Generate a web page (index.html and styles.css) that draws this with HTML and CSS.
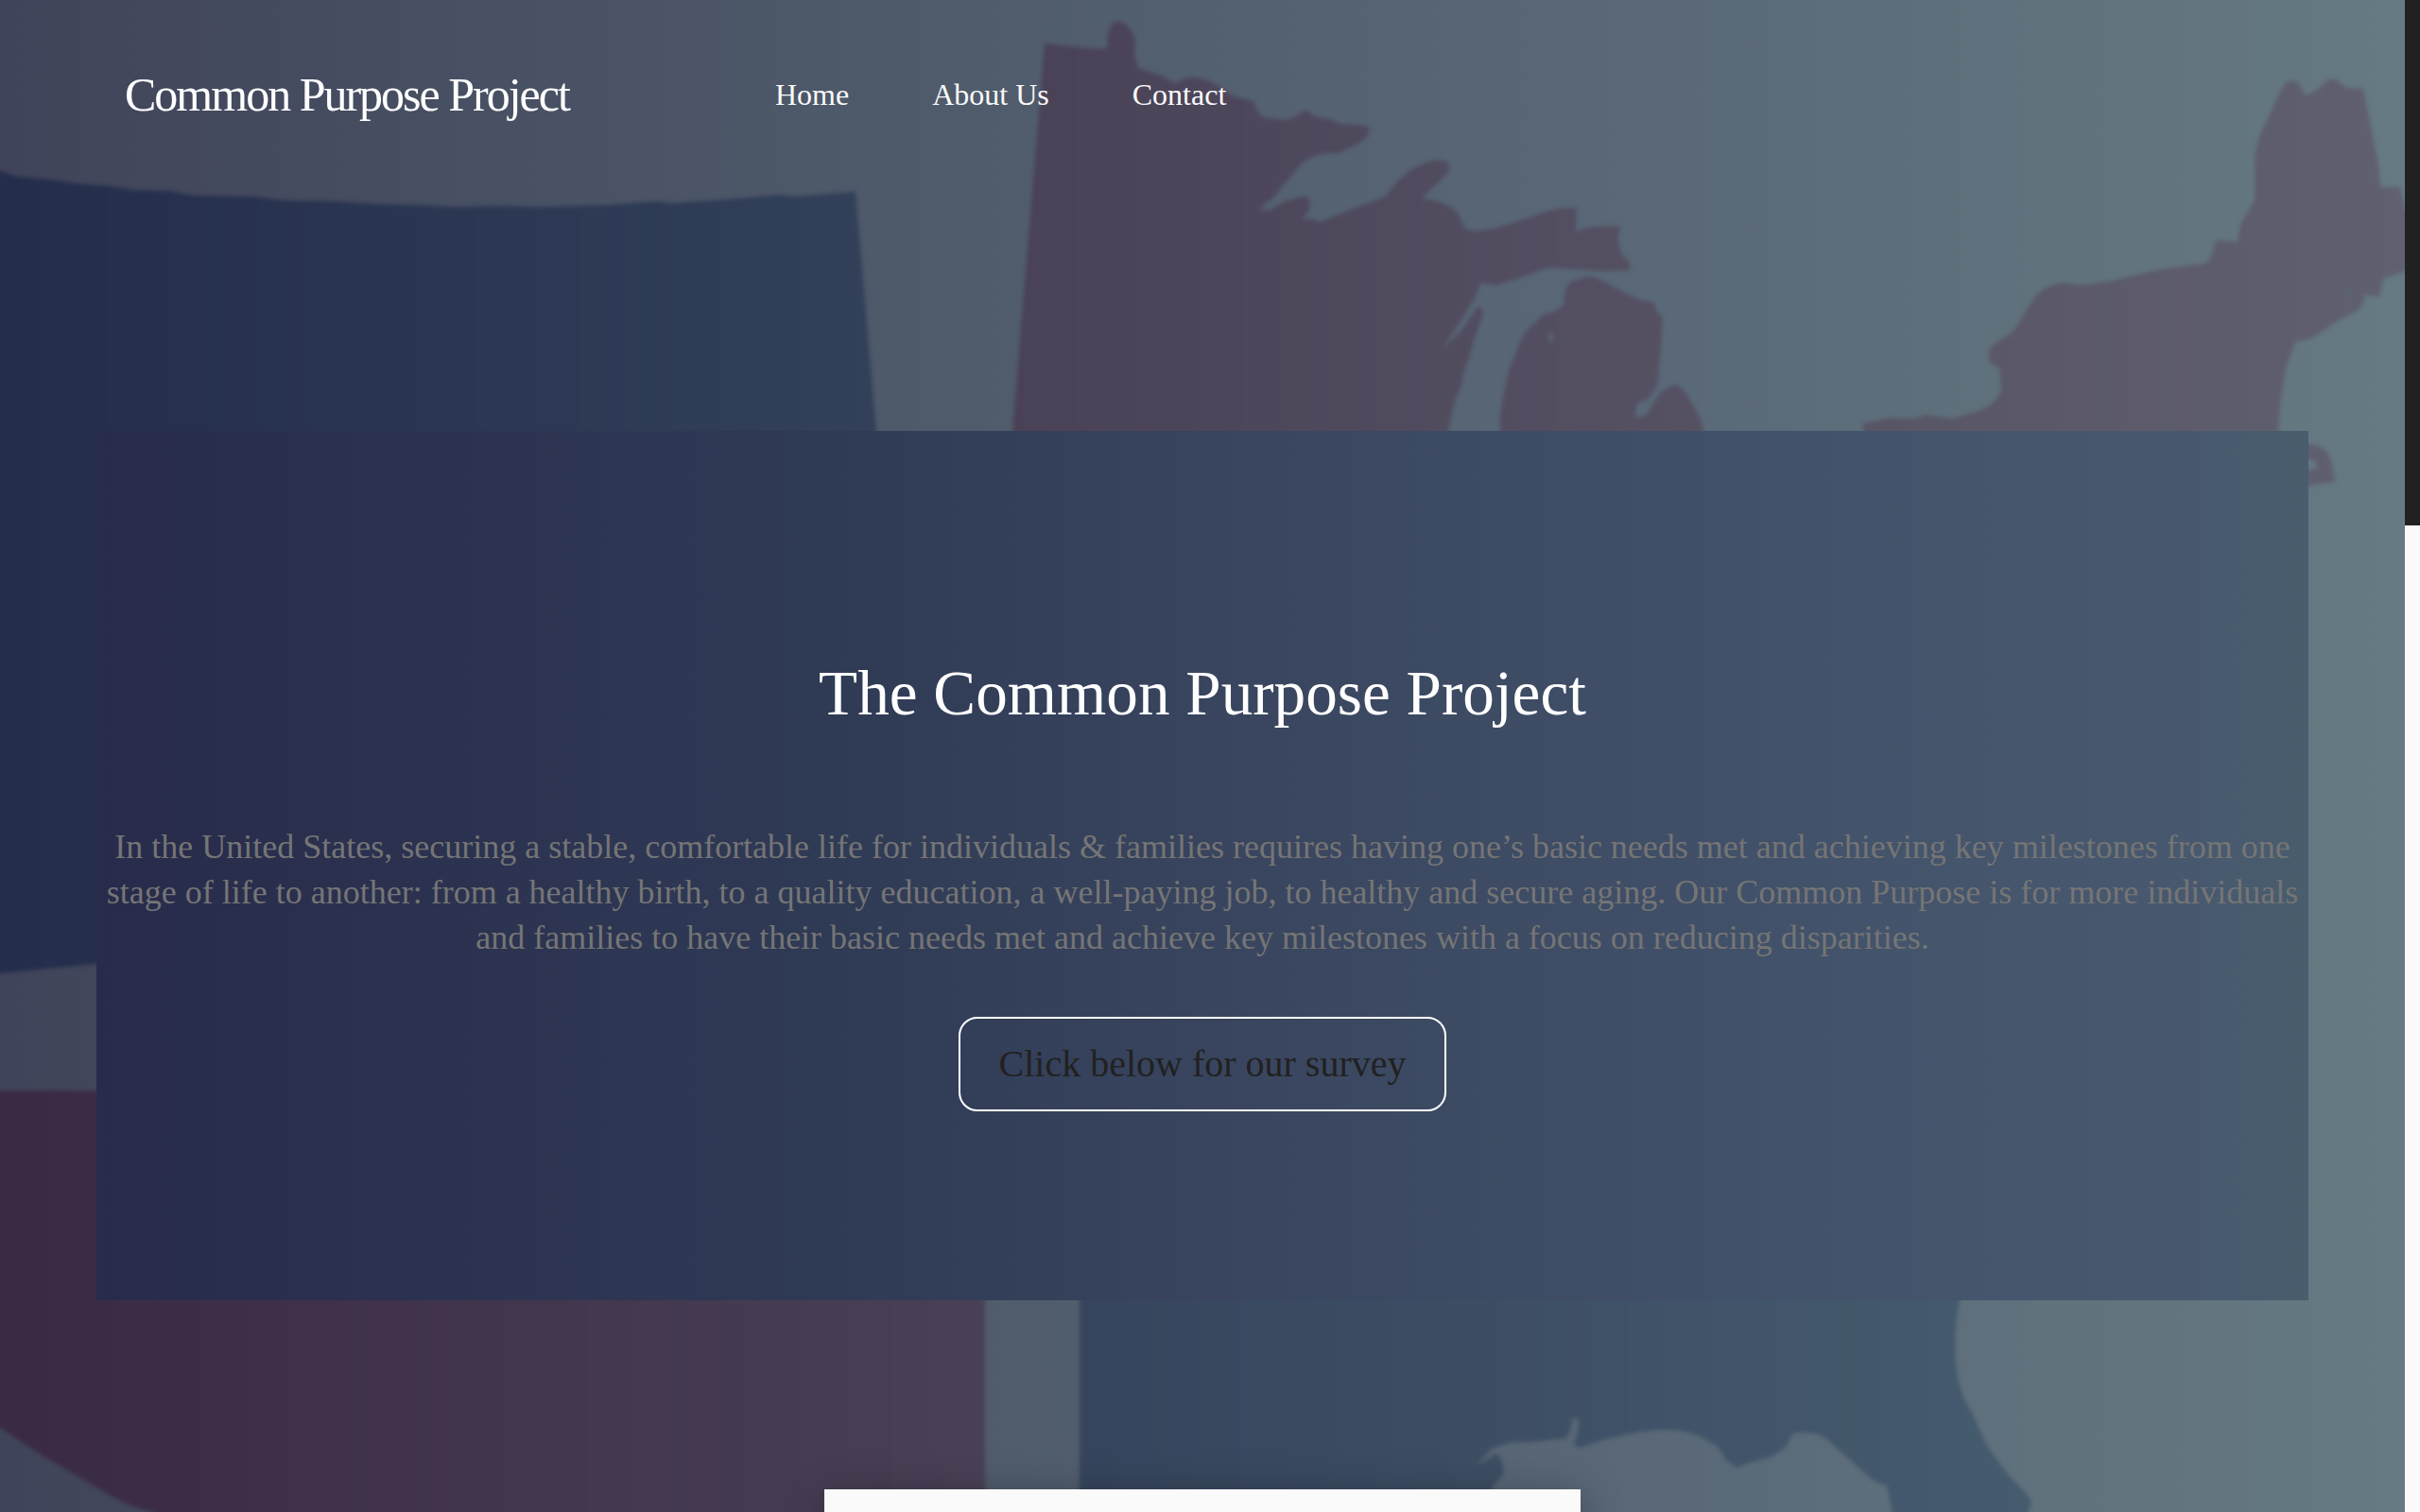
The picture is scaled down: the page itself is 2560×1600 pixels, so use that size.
FILE: index.html
```html
<!DOCTYPE html>
<html lang="en">
<head>
<meta charset="utf-8">
<title>Common Purpose Project</title>
<link rel="stylesheet" href="styles.css">
</head>
<body>
<div class="page">
  <main class="hero">
    <svg class="map" viewBox="0 0 2544 1600" preserveAspectRatio="none" aria-hidden="true">
      <defs>
        <linearGradient id="blue" gradientUnits="userSpaceOnUse" x1="0" y1="0" x2="2544" y2="0">
          <stop offset="0" stop-color="#242d4b"/>
          <stop offset=".36" stop-color="#324059"/>
          <stop offset=".63" stop-color="#3e4f65"/>
          <stop offset="1" stop-color="#4b6476"/>
        </linearGradient>
        <linearGradient id="red" gradientUnits="userSpaceOnUse" x1="0" y1="0" x2="2544" y2="0">
          <stop offset="0" stop-color="#3a2a44"/>
          <stop offset=".43" stop-color="#4a4257"/>
          <stop offset=".8" stop-color="#595667"/>
          <stop offset="1" stop-color="#606070"/>
        </linearGradient>
        <filter id="soft" filterUnits="userSpaceOnUse" x="-20" y="-20" width="2584" height="1640" color-interpolation-filters="sRGB">
          <feGaussianBlur stdDeviation="2"/>
        </filter>
      </defs>
      <g filter="url(#soft)">
        <!-- Plains -->
        <path fill="url(#blue)" d="M-20 177L0 181 18 187 54 190 80 194 116 197 140 201 179 202 205 207 268 208 300 212 357 213 400 216 446 217 482 219 530 218 571 219 640 217 696 213 710 215 770 211 826 206 839 208 905 203 927 456 960 900 102 1020 -20 1032Z"/>
        <!-- Southwest -->
        <path fill="url(#red)" d="M-20 1154H1042V1620H180L161 1600C140 1596 120 1585 102 1574L46 1541 0 1511-20 1500Z"/>
        <!-- Southeast and Gulf coast -->
        <path fill="url(#blue)" d="M1142 1300H2085L2073 1376C2068 1400 2067 1425 2070 1450 2074 1475 2078 1480 2085 1493L2102 1530 2124 1560 2145 1582Q2152 1590 2145 1600V1620H2002L2002 1600 1996 1572Q1982 1568 1976 1562L1955 1543 1937 1527Q1928 1518 1920 1517L1907 1516Q1897 1515 1896 1518L1890 1530Q1882 1538 1872 1542L1850 1548 1837 1553 1826 1545 1818 1532Q1808 1524 1798 1520 1780 1512 1759 1513 1740 1514 1725 1517L1694 1524 1672 1532 1666 1530 1666 1524Q1672 1512 1669 1501L1663 1501Q1663 1515 1656 1522L1620 1526 1599 1526Q1578 1532 1573 1538L1562 1551 1583 1538Q1592 1548 1590 1560L1577 1576V1620H1142Z"/>
        <!-- Upper Midwest -->
        <path fill="url(#red)" d="M1105 46L1162 52Q1170 52 1172 48 1170 28 1180 23 1188 22 1193 28 1201 36 1201 46L1200 57 1204 72 1229 80 1244 89Q1254 80 1264 82 1274 83 1280 86L1305 102 1326 107Q1329 122 1341 125L1361 127Q1373 123 1381 116L1392 124 1407 126 1418 131 1447 133Q1450 137 1446 145 1435 155 1415 162L1397 163Q1384 167 1377 173L1361 192 1346 210 1331 222 1344 222 1359 213 1382 207Q1388 214 1384 224L1377 232Q1388 230 1397 235L1418 226 1466 208Q1474 195 1484 187 1495 176 1509 172 1522 168 1530 171 1535 174 1531 184L1517 197 1504 210Q1533 213 1543 227L1550 242 1558 245 1581 242 1612 232 1642 222Q1655 219 1668 220L1667 246Q1676 240 1690 240L1714 239 1711 253 1716 270 1724 277 1724 286 1698 287 1639 283 1610 293 1583 302 1566 299 1560 315 1545 340 1525 370 1546 350 1563 325Q1570 326 1568 335L1558 363 1554 380 1549 390 1546 408 1539 423 1532 456V480H1069L1071 456Z"/>
        <path fill="url(#red)" d="M1587 480V456Q1586 440 1590 420L1596 393 1606 367Q1611 354 1617 348L1634 332 1645 330 1655 322Q1654 312 1656 307 1658 300 1665 297L1678 293Q1686 292 1693 296L1719 310 1734 317 1749 320Q1752 330 1759 337L1757 367 1754 400Q1754 412 1742 423L1733 426Q1728 434 1731 442L1742 439 1755 417Q1763 410 1773 407 1783 412 1787 422L1799 443 1802 456V480Z"/>
        <!-- Northeast -->
        <path fill="url(#red)" d="M1971 448L2001 442 2024 443 2037 439 2065 443 2093 435Q2105 430 2111 423L2117 413 2115 390 2104 383V373Q2106 366 2113 362 2130 352 2134 344L2148 321Q2154 310 2164 305 2174 299 2184 299 2204 303 2216 300L2235 297 2285 285 2331 279Q2338 277 2340 268L2344 254 2367 256 2370 237 2385 212V172Q2386 155 2391 142L2402 119Q2410 100 2418 87 2430 83 2433 90L2439 101Q2450 97 2456 90 2468 78 2474 87L2483 93 2500 94 2508 134 2515 168 2518 198H2539L2544 222 2570 240V277L2544 287 2521 295 2517 314 2500 312Q2504 320 2492 330L2474 339 2446 358 2428 362 2418 390 2412 429 2408 480H1971Z"/>
        <path fill="none" stroke="url(#red)" stroke-width="16" d="M2435 479Q2456 475 2459 492L2461 503 2450 504 2435 508"/>
      </g>
      <g class="lakes" filter="url(#soft)">
        <ellipse cx="1641" cy="357" rx="4" ry="6"/>
        <circle cx="2484" cy="310" r="4"/>
      </g>
    </svg>

    <header class="topbar">
      <a class="brand">Common Purpose Project</a>
      <nav class="menu">
        <a>Home</a>
        <a>About Us</a>
        <a>Contact</a>
      </nav>
    </header>

    <section class="panel">
      <h1 class="title">The Common Purpose Project</h1>
      <p class="lead">In the United States, securing a stable, comfortable life for individuals &amp; families requires having one’s basic needs met and achieving key milestones from one<br>stage of life to another: from a healthy birth, to a quality education, a well-paying job, to healthy and secure aging. Our Common Purpose is for more individuals<br>and families to have their basic needs met and achieve key milestones with a focus on reducing disparities.</p>
      <a class="survey">Click below for our survey</a>
    </section>

    <div class="card"></div>
  </main>
  <aside class="edge"><div class="edge-dark"></div></aside>
</div>
</body>
</html>
```
FILE: styles.css
```css
body {
  margin: 0;
  overflow: hidden;
  font-family: "Liberation Serif", "Times New Roman", serif;
}

.page {
  display: flex;
  height: 1600px;
  overflow: hidden;
}

.hero {
  position: relative;
  isolation: isolate;
  display: flex;
  flex-direction: column;
  width: 2544px;
  height: 1600px;
  overflow: hidden;
  background: linear-gradient(90deg, #40445a 0%, #4f5b6b 39%, #5b6a79 72%, #5f717c 83%, #667a83 100%);
}

.map {
  position: absolute;
  inset: 0;
  z-index: -1;
  width: 100%;
  height: 100%;
}

.lakes {
  fill: #5c6775;
  opacity: .6;
}

.topbar {
  display: flex;
  align-items: center;
  flex: none;
  height: 200px;
  margin-bottom: 256px;
  padding-left: 132px;
  color: #fff;
}

.brand {
  width: 688px;
  font-size: 50px;
  letter-spacing: -2px;
}

.menu {
  display: flex;
  gap: 88px;
  color: #fafafa;
  font-size: 32px;
}

.panel {
  display: flex;
  flex-direction: column;
  align-items: center;
  box-sizing: border-box;
  width: 2340px;
  height: 920px;
  margin: 0 102px 200px;
  padding-top: 236px;
  flex: none;
  background: linear-gradient(90deg, #282b4b 0%, #2f3a55 33%, #39455e 51%, #42526a 77%, #48596f 95%, #495d6d 100%);
}

.title {
  margin: 0 0 96px;
  color: #fff;
  font-size: 67.2px;
  font-weight: 400;
  line-height: 84px;
}

.lead {
  margin: 0 0 60px;
  color: #757575;
  font-size: 36px;
  line-height: 48px;
  text-align: center;
  white-space: nowrap;
}

.survey {
  box-sizing: border-box;
  height: 100px;
  padding: 0 40px;
  border: 2px solid #fff;
  border-radius: 20px;
  color: #212121;
  font-size: 40px;
  line-height: 95px;
}

.card {
  width: 800px;
  height: 400px;
  margin: 0 auto;
  flex: none;
  background: #fafafa;
  box-shadow: 0 10px 44px rgba(0, 0, 0, .33);
}

.edge {
  width: 16px;
  background: #fafafa;
}

.edge-dark {
  height: 556px;
  background: #212121;
}
```
